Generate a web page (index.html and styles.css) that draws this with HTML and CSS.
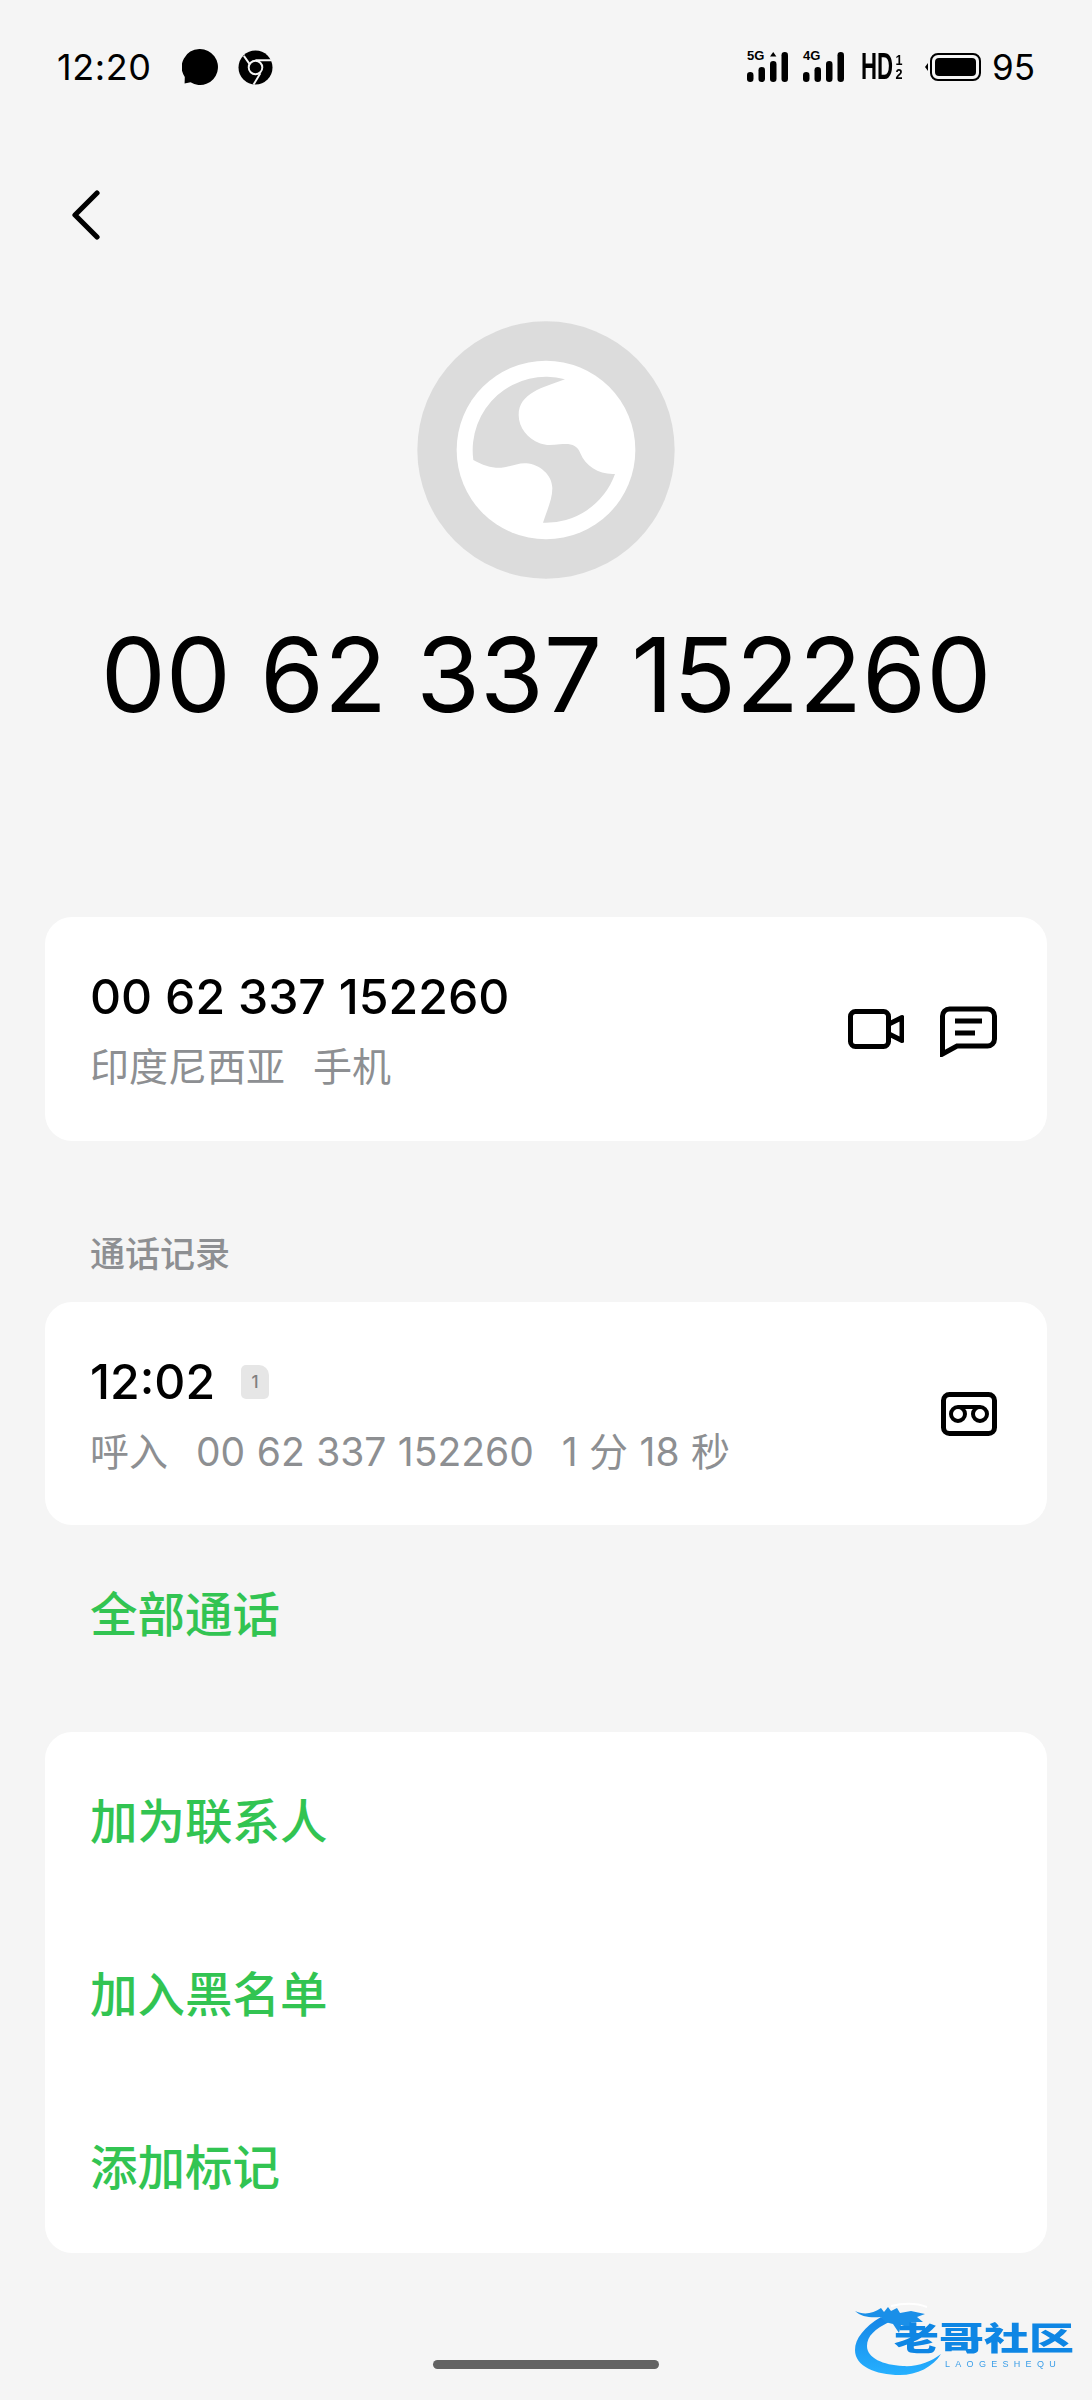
FILE: index.html
```html
<!DOCTYPE html>
<html lang="zh">
<head>
<meta charset="utf-8">
<title>通话详情</title>
<link rel="stylesheet" href="styles.css">
</head>
<body>
<div class="phone">
  <header class="status">
    <div class="status-left">
      <span class="clock">12:20</span>
      <svg class="notif bubble" viewBox="0 0 36 36"><path d="M18 0a18 18 0 1 1-9.500 33.300L2.600 34.500 2.800 28A18 18 0 0 1 18 0z"/></svg>
      <svg class="notif chrome" viewBox="0 0 36 36">
        <circle cx="18" cy="18" r="17.500" fill="#000"/>
        <circle cx="18" cy="18" r="7" fill="none" stroke="#f5f5f5" stroke-width="2"/>
        <path d="M18 10.500H35M12 14.500L6 6M23 24L16 35.500" stroke="#f5f5f5" stroke-width="2" fill="none"/>
      </svg>
    </div>
    <div class="status-right">
      <div class="signal">
        <span class="net">5G</span>
        <svg class="bars" viewBox="0 0 41 30"><rect x="0" y="20" width="6.500" height="10" rx="3.200"/><rect x="11.500" y="15" width="6.500" height="15" rx="3.200"/><path d="M26.200 0l3.200 4.500h-6.400z"/><rect x="23" y="9" width="6.500" height="21" rx="3.200"/><rect x="34.500" y="0" width="6.500" height="30" rx="3.200"/></svg>
      </div>
      <div class="signal">
        <span class="net">4G</span>
        <svg class="bars" viewBox="0 0 41 30"><rect x="0" y="20" width="6.500" height="10" rx="3.200"/><rect x="11.500" y="15" width="6.500" height="15" rx="3.200"/><rect x="23" y="9" width="6.500" height="21" rx="3.200"/><rect x="34.500" y="0" width="6.500" height="30" rx="3.200"/></svg>
      </div>
      <div class="hd"><span class="hd-main">HD</span><span class="hd-sub"><b>1</b><b>2</b></span></div>
      <svg class="battery" viewBox="0 0 56 28">
        <path d="M0 14l3-4v8z"/>
        <rect x="6" y="1" width="49" height="26" rx="7" fill="none" stroke="#000" stroke-width="2"/>
        <rect x="10" y="5" width="41" height="18" rx="4"/>
      </svg>
      <span class="level">95</span>
    </div>
  </header>

  <nav class="nav">
    <svg class="back" viewBox="0 0 32 54"><path d="M26 3L4 25 26 47" fill="none" stroke="#000" stroke-width="5.200" stroke-linecap="round" stroke-linejoin="round"/></svg>
  </nav>

  <section class="hero">
    <svg class="avatar" viewBox="112 64 774 772">
      <circle cx="499" cy="450" r="386" fill="#dcdcdc"/>
      <circle cx="499" cy="450" r="268" fill="#fff"/>
      <path fill="#dcdcdc" d="M556 238A220 220 0 0 0 281 480C310 497 340 505 365 503C395 500 415 488 440 490C480 493 518 525 518 565C518 600 500 635 490 668A220 220 0 0 0 706 522C660 525 618 500 602 460C592 432 570 430 540 433C520 435 500 438 480 430C445 415 417 385 417 345C417 280 490 262 556 238Z"/>
    </svg>
    <h1 class="big-number">00 62 337 152260</h1>
  </section>

  <section class="card row-card">
    <div class="info">
      <div class="primary">00 62 337 152260</div>
      <div class="secondary"><span>印度尼西亚</span><span>手机</span></div>
    </div>
    <div class="actions">
      <svg class="act video" viewBox="0 0 56 40"><rect x="2.500" y="2.500" width="38" height="35" rx="5" fill="none" stroke="#000" stroke-width="5"/><path d="M41 15L54 8.500V31.500L41 25" fill="none" stroke="#000" stroke-width="5" stroke-linejoin="round"/></svg>
      <svg class="act msg" viewBox="0 0 57 51"><path d="M2.500 48V10A7 7 0 0 1 9.500 3H47.500A7 7 0 0 1 54.500 10V33A7 7 0 0 1 47.500 40H17Z" fill="none" stroke="#000" stroke-width="5" stroke-linejoin="miter"/><path d="M15 15H42M15 27H35" stroke="#000" stroke-width="5" fill="none"/></svg>
    </div>
  </section>

  <div class="section-label">通话记录</div>

  <section class="card row-card short">
    <div class="info">
      <div class="primary time-row"><span>12:02</span><span class="sim">1</span></div>
      <div class="secondary"><span>呼入</span><span>00 62 337 152260</span><span>1 分 18 秒</span></div>
    </div>
    <div class="actions">
      <svg class="act vm" viewBox="0 0 56 44"><rect x="2.500" y="2.500" width="51" height="39" rx="6" fill="none" stroke="#000" stroke-width="5"/><circle cx="17" cy="22" r="7" fill="none" stroke="#000" stroke-width="4"/><circle cx="39" cy="22" r="7" fill="none" stroke="#000" stroke-width="4"/><path d="M17 15H39" stroke="#000" stroke-width="4"/></svg>
    </div>
  </section>

  <div class="link all">全部通话</div>

  <section class="card menu">
    <div class="link">加为联系人</div>
    <div class="link">加入黑名单</div>
    <div class="link">添加标记</div>
  </section>

  <footer class="foot">
    <div class="home-bar"></div>
    <div class="mark">
      <svg class="dragon" viewBox="0 0 100 76">
        <defs><linearGradient id="ring" x1="0" y1="0" x2="0" y2="1"><stop offset="0" stop-color="#1585e6"/><stop offset="1" stop-color="#25b0ff"/></linearGradient></defs>
        <path d="M26 15C9 25 0 37 0 48C0 64 20 73 45 73C62 73 78 65 86 52C76 60 62 65 48 64C28 63 12 56 12 44C12 34 20 27 34 20Z" fill="url(#ring)"/>
        <path d="M0 9C8 13 18 12 26 6L29 10 33 5 36 9 42 6 45 11 56 9 70 12 62 15 68 20 56 20 58 27 46 23 44 31 38 22 30 20 26 15C16 16 6 15 0 9Z" fill="#1a8fe8"/>
        <path d="M36 4C48 1 62 1 72 5" stroke="#fff" stroke-width="2" fill="none"/>
      </svg>
      <div class="mark-text"><span class="mark-cn">老哥社区</span><span class="mark-en">LAOGESHEQU</span></div>
    </div>
  </footer>
</div>
</body>
</html>
```
FILE: styles.css
```css
* { box-sizing: border-box; }
html, body { margin: 0; padding: 0; }
body { background: #f5f5f5; font-family: Inter, "Noto Sans CJK SC", sans-serif; color: #000; }
.phone { width: 1092px; height: 2400px; display: flex; flex-direction: column; overflow: hidden; }

.status { height: 134px; padding: 0 58px 0 57px; display: flex; justify-content: space-between; align-items: center; }
.status-left { display: flex; align-items: center; }
.clock { font-size: 36px; letter-spacing: 0.6px; width: 125px; }
.notif { width: 36px; height: 36px; fill: #000; }
.bubble { margin-right: 20px; }
.chrome { width: 35px; height: 35px; }
.status-right { display: flex; align-items: center; }
.signal { height: 30px; margin-right: 15px; position: relative; width: 41px; }
.net { position: absolute; left: 0; top: -2px; font: 700 13px/12px "Liberation Sans", sans-serif; }
.bars { width: 41px; height: 30px; position: absolute; left: 0; bottom: 0; fill: #000; }
.hd { display: flex; align-items: center; margin-left: 2px; margin-right: 19px; height: 30px; width: 45px; }
.hd-main { font: 700 37px/30px "Liberation Sans", sans-serif; transform: scaleX(0.6); transform-origin: left; width: 34px; flex: none; }
.hd-sub { display: flex; flex-direction: column; font: 700 14px/14px "Liberation Sans", sans-serif; transform: scaleX(0.9); }
.hd-sub b { display: block; }
.battery { width: 56px; height: 28px; fill: #000; margin-right: 11px; }
.level { font-size: 35px; width: 42px; letter-spacing: 0; white-space: nowrap; }

.nav { height: 136px; padding: 58px 0 0 71px; display: flex; align-items: flex-start; }
.back { width: 32px; height: 54px; margin-top: -2px; }

.hero { display: flex; flex-direction: column; align-items: center; height: 647px; }
.avatar { width: 258px; height: 258px; margin-top: 51px; }
.big-number { margin: 40px 0 0; font-size: 103.300px; line-height: 112px; font-weight: 400; letter-spacing: 0; white-space: nowrap; }

.card { background: #fff; border-radius: 27px; margin: 0 45px; width: 1002px; }
.row-card { height: 224px; display: flex; justify-content: space-between; align-items: center; padding: 0 50px 0 45px; }
.short { height: 223px; }
.info { display: flex; flex-direction: column; padding-top: 3px; }
.primary { font-size: 48.200px; line-height: 58px; font-weight: 500; }
.secondary { display: flex; gap: 28px; font-size: 39px; line-height: 52px; color: #8d8f92; margin-top: 15px; word-spacing: 0.5px; }
.time-row { display: flex; align-items: center; gap: 26px; }
.sim { width: 28px; height: 34px; background: #e6e6e6; border-radius: 5px 10px 5px 5px; color: #808080; font-size: 17px; line-height: 34px; text-align: center; }
.actions { display: flex; align-items: center; gap: 36px; }
.act { display: block; }
.video { width: 56px; height: 40px; }
.msg { width: 57px; height: 51px; margin-top: 5px; }
.vm { width: 56px; height: 44px; }

.section-label { height: 161px; padding: 88px 0 0 90px; font-size: 35px; line-height: 50px; color: #8d8f92; font-weight: 500; }

.link { color: #32c452; font-size: 47.500px; line-height: 60px; font-weight: 500; }
.all { height: 207px; padding: 60px 0 0 90px; }
.menu { height: 521px; padding: 60px 45px 0; display: flex; flex-direction: column; gap: 113px; }
.menu .link { height: 60px; }

.foot { flex: 1; position: relative; }
.home-bar { position: absolute; left: 433px; top: 107px; width: 226px; height: 9px; background: #636363; border-radius: 5px; }
.mark { position: absolute; left: 855px; top: 49px; width: 222px; height: 76px; filter: blur(0.7px); }
.dragon { position: absolute; left: 0; top: 0; width: 100px; height: 76px; }
.mark-text { position: absolute; left: 39px; top: 24px; display: flex; flex-direction: column; }
.mark-cn { font: 900 45px/36px "Liberation Sans", "Noto Sans CJK SC", sans-serif; color: #0e86e4; white-space: nowrap; transform: scaleY(0.72); transform-origin: top left; height: 33px; }
.mark-en { font: 400 9px/10px "Liberation Sans", sans-serif; color: #3b9ee8; letter-spacing: 5.300px; margin-left: 51px; white-space: nowrap; }
```
